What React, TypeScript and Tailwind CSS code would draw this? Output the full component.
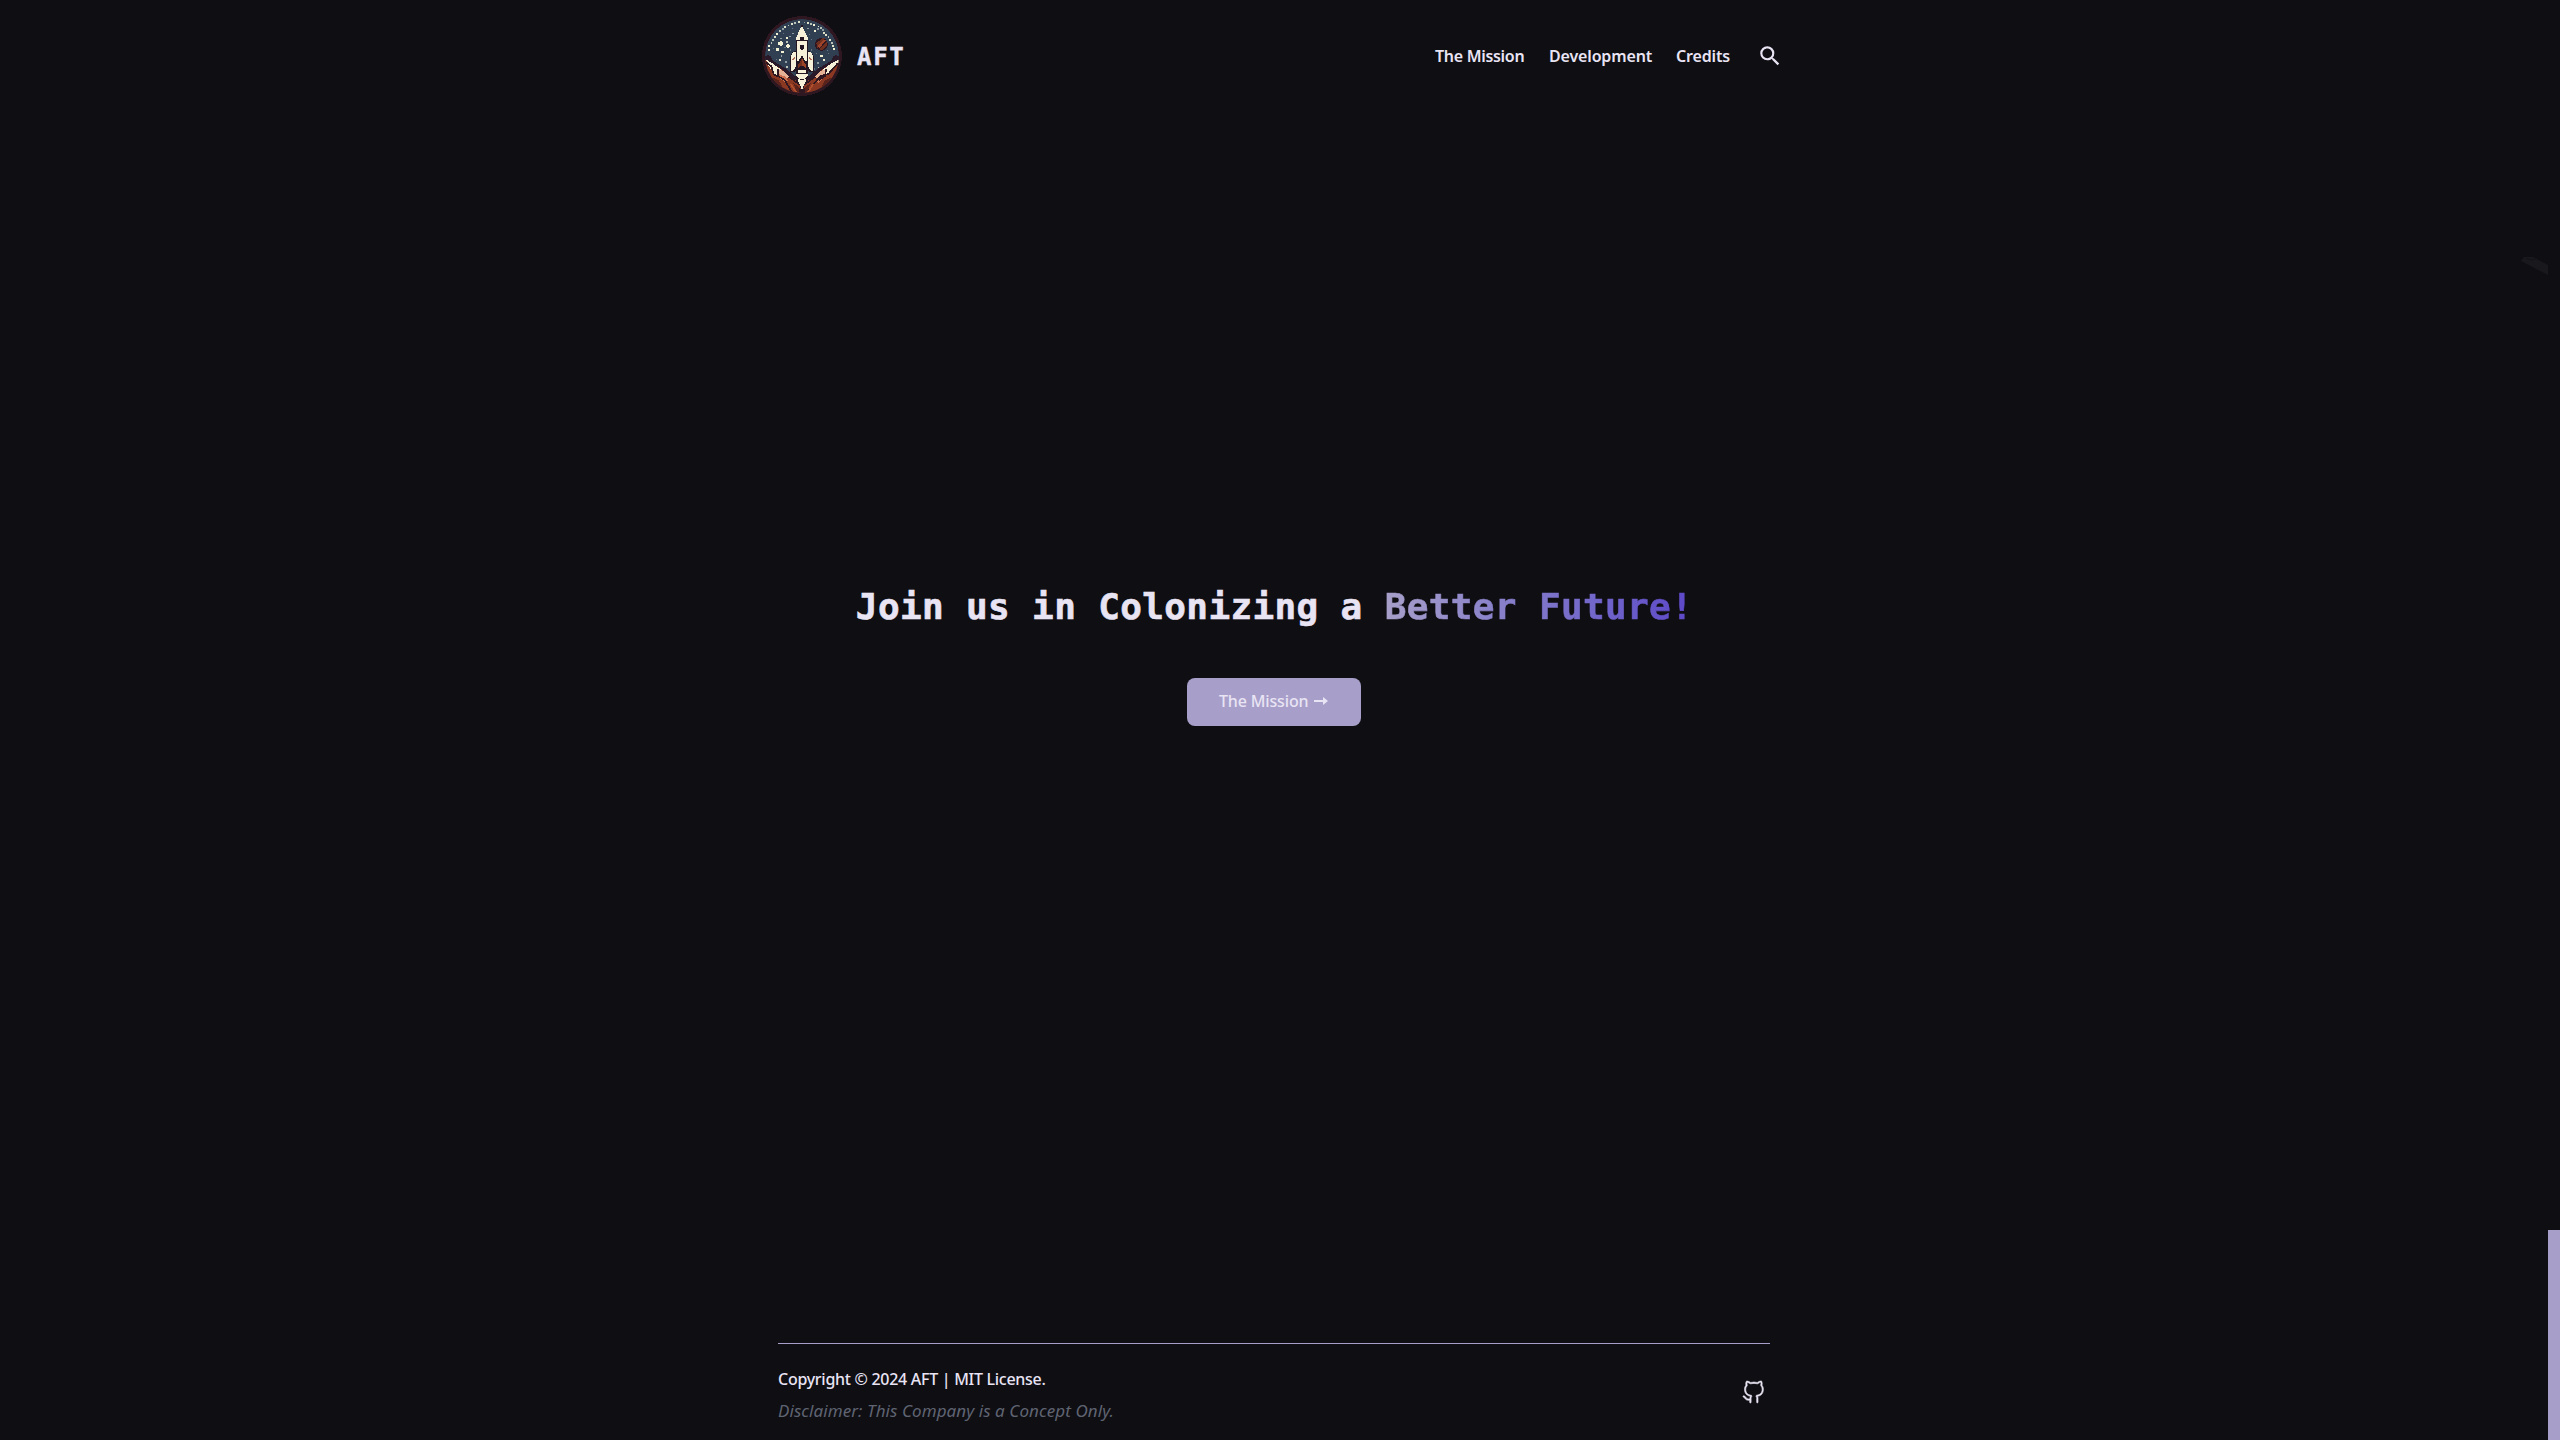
import { VscGithubAlt } from 'react-icons/vsc';
import { MdSearch } from 'react-icons/md';

const stars: [number, number, number, string][] = [
  [58, 139, 6, '#f3f1d4'], [58, 149, 6, '#f3f1d4'], [64, 129, 5, '#b9c2b8'], [69, 119, 6, '#b9c2b8'],
  [74, 111, 6, '#dfe0c8'], [82, 102, 6, '#f3f1d4'], [89, 94, 6, '#b9c2b8'], [98, 88, 6, '#8f9da0'],
  [106, 80, 6, '#dfe0c8'], [115, 76, 5, '#b9c2b8'], [125, 72, 5, '#dfe0c8'], [134, 69, 5, '#b9c2b8'],
  [147, 67, 6, '#dfe0c8'], [163, 67, 5, '#8f9da0'], [174, 69, 5, '#dfe0c8'], [184, 71, 6, '#b9c2b8'],
  [193, 75, 6, '#f3f1d4'], [205, 79, 5, '#dfe0c8'], [203, 87, 6, '#8f9da0'], [213, 84, 5, '#b9c2b8'],
  [219, 90, 6, '#8f9da0'], [221, 99, 6, '#dfe0c8'], [228, 104, 6, '#dfe0c8'], [235, 111, 5, '#b9c2b8'],
  [240, 119, 5, '#dfe0c8'], [245, 128, 5, '#b9c2b8'], [249, 137, 5, '#dfe0c8'], [252, 148, 6, '#f3f1d4'],
  [194, 93, 7, '#f3f1d4'], [174, 85, 5, '#8f9da0'], [128, 86, 4, '#66757f'], [128, 100, 5, '#8f9da0'],
  [119, 109, 5, '#8f9da0'], [110, 113, 5, '#f3f1d4'], [101, 101, 4, '#66757f'], [92, 115, 5, '#8f9da0'],
  [111, 126, 4, '#b9c2b8'], [105, 142, 4, '#66757f'], [70, 145, 4, '#66757f'], [94, 168, 5, '#8f9da0'],
  [90, 180, 6, '#dfe0c8'], [108, 186, 6, '#8f9da0'], [110, 202, 6, '#b9c2b8'], [80, 178, 4, '#66757f'],
  [122, 150, 4, '#66757f'], [184, 150, 4, '#66757f'], [200, 160, 4, '#66757f'], [214, 167, 7, '#f3f1d4'],
  [222, 180, 6, '#f3f1d4'], [204, 188, 5, '#8f9da0'], [205, 202, 5, '#b9c2b8'], [232, 152, 4, '#66757f'],
  [236, 160, 4, '#66757f'], [185, 118, 4, '#66757f'], [178, 104, 4, '#66757f'], [194, 207, 4, '#66757f'],
];

function Logo() {
  return (
    <svg viewBox="36 48 240 240" className="size-20" shapeRendering="crispEdges" aria-label="AFT logo">
      <defs>
        <clipPath id="disc"><circle cx="156" cy="168" r="111" /></clipPath>
      </defs>
      <circle cx="156" cy="168" r="120" fill="#2f1722" />
      <g clipPath="url(#disc)">
        <circle cx="156" cy="168" r="111" fill="#304052" />
        {stars.map(([x, y, s, c]) => (
          <rect key={x + '-' + y} x={x - s / 2} y={y - s / 2} width={s} height={s} fill={c} />
        ))}
        <path d="M89 122h7v3h3v9h-3v3h-7v-3h-4v-9h4z" fill="#f3f1d4" />
        <path d="M78 148h9m7 8h9m5-18h11" stroke="#f3f1d4" strokeWidth="8" />
        <path d="M113 132v11" stroke="#f3f1d4" strokeWidth="5" />
        <circle cx="214" cy="133" r="19.5" fill="#2f1722" />
        <path d="M199 130l17-15h9l-23 29z" fill="#70301f" />
        <path d="M208 148l24-26v14l-13 14z" fill="#70301f" />
        <path d="M203 138l18-20 7 4-21 23z" fill="#9c432a" />
        {/* ridges behind the launch site */}
        <path d="M36 176l18-12 8 5 6 13 40 24 48 39 48-39 40-24 6-13 8-5 18 12v120H36z" fill="#2a1a29" />
        <path d="M46 180l46 26 24 24 26 14 14 26 14-26 26-14 24-24 46-26v112H46z" fill="#8a3822" />
        <path d="M47 178l20 12 20 14 10 8-13 0-2 16-12-6-6-13-10-13z" fill="#f7f0d8" />
        <path d="M267 178l-22 12-22 15-8 7 13-2-4 12 12-2 18-19 12-13z" fill="#f7f0d8" />
        <path d="M86 208l12 4 18 18-7 6-24-12zM226 208l-12 4-18 18 7 6 22-14z" fill="#e6b295" />
        <path d="M84 221l22 9 8 12-8 6-22-18zM228 221l-22 9-8 12 8 6 20-18z" fill="#cc6f4c" />
        {/* shaded gullies */}
        <path d="M48 187l16 12 7 24 15 7M84 206v22l20 12 22 36M264 189l-28 32-24 8-21 22-18 25M228 207l-2 20-20 14M116 230l32 23M196 230l-32 23" fill="none" stroke="#2f1722" strokeWidth="5" />
        <path d="M66 232l20 8 20 36-20-4-22-24zM246 232l-20 8-20 36 20-4 22-24z" fill="#59231c" />
        <path d="M130 250l14 8 12 18 12-18 14-8-14 36h-24z" fill="#59231c" />
        <path d="M148 262l8 10 8-10v24h-16z" fill="#2f1722" />
        <path d="M122 252l16 24M190 252l-16 24" stroke="#b04f2d" strokeWidth="5" />
      </g>
      {/* rocket */}
      <path d="M153 76h6v9l5 9 6 12 5 12v34l10 6 7 12v47h-14l-4-7v18l-3 14-7 13-5 14h-6l-5-14-7-13-3-14v-18l-4 7h-14v-47l6-12 11-6v-34l5-12 7-14 5-10z" fill="#241523" />
      <path d="M154 80h4l5 12 10 20h-34l9-20z" fill="#f7f0d8" />
      <path d="M140 123h32v60h-32z" fill="#f7f0d8" />
      <path d="M147 114h18v10h-18z" fill="#241523" />
      <path d="M137 112h12v7h-12zM163 112h12v7h-12z" fill="#f7f0d8" />
      <rect x="149" y="135" width="14" height="14" rx="4" fill="#241523" />
      <path d="M137 157v44l-8 11h-5v-45l5-10zM175 157v44l8 11h5v-45l-5-10z" fill="#f7f0d8" />
      <path d="M126 179l10-6M186 179l-10-6" stroke="#b06c55" strokeWidth="4" />
      <path d="M156 166l15 25v20l-15-13-15 13v-20z" fill="#241523" />
      <path d="M156 174l13 24v9l-9-8h-8l-9 8v-9z" fill="#9b4428" />
      <path d="M156 174v25h-4l-9 8v-9z" fill="#74301f" />
      <path d="M143 211h26v7h-26zM139 222h34v7l-10 7h-14l-10-7z" fill="#f7f0d8" />
      <path d="M144 235l8 5h8l8-5v10l-7 10-3 11h-4l-3-11-7-10z" fill="#f7f0d8" />
    </svg>
  );
}

export default function App() {
  return (
    <div className="flex h-screen overflow-hidden bg-[#0f0e13] font-['Noto_Sans',sans-serif] text-base text-[#e9e4f4]">
      <div className="relative flex min-w-0 flex-1 flex-col">
        <header className="mx-auto flex h-28 w-[1024px] items-center">
          <Logo />
          <span className="mt-0.5 ml-[15px] font-['DejaVu_Sans_Mono',monospace] text-2xl font-bold tracking-[1.7px] [-webkit-text-stroke:0.4px]">AFT</span>
          <nav className="ml-auto flex items-center gap-6 pr-1 pb-px font-semibold">
            <a className="w-[90px] whitespace-nowrap tracking-[-0.3px]">The Mission</a>
            <a className="w-[103px] whitespace-nowrap tracking-[-0.15px]">Development</a>
            <a className="w-[57px] whitespace-nowrap tracking-[-0.15px]">Credits</a>
            <MdSearch size={26} className="-mr-px" />
          </nav>
        </header>

        <main className="flex flex-1 flex-col items-center pt-[475px]">
          <h1 className="whitespace-nowrap pl-px font-['DejaVu_Sans_Mono',monospace] text-4xl font-bold tracking-[0.36px] [-webkit-text-stroke:0.6px]">
            Join us in Colonizing a{' '}
            <span className="bg-linear-to-r from-[#a79fc9] to-[#5d47c8] bg-clip-text text-transparent">Better Future!</span>
          </h1>
          <button className="mt-[51px] flex h-12 w-[174px] items-center whitespace-nowrap rounded-lg bg-[#a79fc9] pb-0.5 pl-8 font-medium tracking-[-0.15px]">
            The Mission
            <svg viewBox="0 0 14 10" className="ml-1.5 h-2.5 w-3.5" fill="currentColor">
              <path d="M0 4h9V1l5 4-5 4V6H0z" />
            </svg>
          </button>
        </main>

        <footer className="mx-auto flex h-[97px] w-[992px] justify-between border-t border-[#a79fc9] pt-[23px]">
          <div className="flex flex-col gap-2">
            <p className="font-medium tracking-[-0.28px]">Copyright © 2024 AFT | MIT License.</p>
            <p className="text-[17px] leading-6 tracking-[0.08px] text-[#5f6472] italic">Disclaimer: This Company is a Concept Only.</p>
          </div>
          <VscGithubAlt size={24} className="mt-[13px] mr-[5px]" stroke="currentColor" strokeWidth={0.6} />
        </footer>

        <svg viewBox="0 0 27 20" className="absolute top-[256px] right-0 h-5 w-[27px]">
          <path d="M3 1h9l15 8v10L0 5z" fill="#19181d" />
          <path d="M5 2.500l7 1.500 4-1.500" fill="none" stroke="#131217" />
        </svg>
      </div>
      <div className="flex w-3 flex-col justify-end">
        <div className="h-[210px] bg-[#a79fc9]" />
      </div>
    </div>
  );
}
